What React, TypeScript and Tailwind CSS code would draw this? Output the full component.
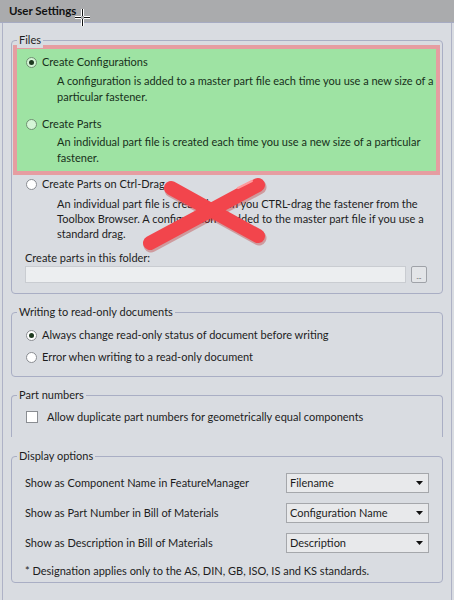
import React from "react";

const font = { fontFamily: "Lato, 'Open Sans', sans-serif" };

function Radio({ checked, green }: { checked?: boolean; green?: boolean }) {
  return (
    <span
      className={`flex h-[11px] w-[11px] shrink-0 items-center justify-center rounded-full border ${
        green ? "border-[#6f8f72] bg-[#d4f5d6]" : "border-[#8a8d92] bg-white"
      }`}
    >
      {checked && <span className="h-[5px] w-[5px] rounded-full bg-[#1e3a20]" />}
    </span>
  );
}

function Select({ value }: { value: string }) {
  return (
    <div className="flex h-[20px] w-[143px] items-center justify-between border border-[#a5a7ab] bg-[#e8e9eb] pl-[3px] pr-[5px] text-[#1d1d1d]">
      <span>{value}</span>
      <svg width="7" height="4" viewBox="0 0 7 4">
        <path d="M0 0h7L3.5 4z" fill="#111" />
      </svg>
    </div>
  );
}

function Legend({ children }: { children: React.ReactNode }) {
  return (
    <span className="absolute left-[5px] top-[-9px] bg-[#d9dce1] px-[2px] leading-[16px] text-[#1d1d1d]">
      {children}
    </span>
  );
}

export default function App() {
  return (
    <div
      className="relative h-[600px] w-[454px] overflow-hidden bg-[#d9dce1] text-[11px] leading-[16px] text-[#1d1d1d]"
      style={font}
    >
      <div className="flex h-[23px] items-center border-b border-[#a6abc2] bg-[#aaabad] pl-[9px] text-[11.5px] font-bold text-[#111]">
        User Settings
      </div>
      <div className="ml-[2px] flex h-[577px] w-[450px] flex-col border-x border-[#aeb2c6] bg-[#d9dce1] pl-[8px] pt-[17px]">
        {/* Files */}
        <div className="relative w-[432px] rounded-[4px] border border-[#a9aec4] pb-[10px] pt-[4px]">
          <Legend>Files</Legend>
          <div className="ml-[1px] w-[427px] border-[4px] border-[#e69da1] bg-[#9ee3a3] pb-[5px] pt-[5px] text-[#17301a]">
            <div className="flex h-[16px] items-center pl-[9px]">
              <Radio checked green />
              <span className="ml-[5px]">Create Configurations</span>
            </div>
            <div className="mt-[3px] pl-[40px]">
              A configuration is added to a master part file each time you use a new size of a
              <br />
              particular fastener.
            </div>
            <div className="mt-[11px] flex h-[16px] items-center pl-[9px]">
              <Radio green />
              <span className="ml-[5px]">Create Parts</span>
            </div>
            <div className="mt-[2px] pl-[40px]">
              An individual part file is created each time you use a new size of a particular
              <br />
              fastener.
            </div>
          </div>
          <div className="mt-[1px] flex h-[16px] items-center pl-[14px]">
            <Radio />
            <span className="ml-[5px]">Create Parts on Ctrl-Drag</span>
          </div>
          <div className="mt-[4px] pl-[45px] leading-[15px]">
            An individual part file is created when you CTRL-drag the fastener from the
            <br />
            Toolbox Browser. A configuration is added to the master part file if you use a
            <br />
            standard drag.
          </div>
          <div className="mt-[9px] pl-[13px]">Create parts in this folder:</div>
          <div className="flex items-center pl-[13px]">
            <div className="h-[17px] w-[381px] border border-[#c9ccd1] bg-[#eceef0]" />
            <div className="ml-[5px] flex h-[17px] w-[16px] items-end justify-center rounded-[2px] border border-[#9fa2a8] bg-[#e3e5e8] pb-[2px] text-[7px] leading-[7px] text-[#555]">
              ...
            </div>
          </div>
        </div>

        {/* Writing */}
        <div className="relative mt-[18px] w-[432px] rounded-[4px] border border-[#a9aec4] pb-[11px] pt-[14px]">
          <Legend>Writing to read-only documents</Legend>
          <div className="flex h-[16px] items-center pl-[14px]">
            <Radio checked />
            <span className="ml-[5px]">Always change read-only status of document before writing</span>
          </div>
          <div className="mt-[6px] flex h-[16px] items-center pl-[14px]">
            <Radio />
            <span className="ml-[5px]">Error when writing to a read-only document</span>
          </div>
        </div>

        {/* Part numbers */}
        <div className="relative mt-[18px] w-[432px] rounded-t-[4px] border border-b-0 border-[#a9aec4] pb-[12px] pt-[13px]">
          <Legend>Part numbers</Legend>
          <div className="flex h-[16px] items-center pl-[14px]">
            <span className="h-[12px] w-[12px] shrink-0 border border-[#8a8d92] bg-white" />
            <span className="ml-[9px]">Allow duplicate part numbers for geometrically equal components</span>
          </div>
        </div>

        {/* Display options */}
        <div className="relative mt-[19px] w-[432px] rounded-[4px] border border-[#a9aec4] pb-[3px] pt-[16px]">
          <Legend>Display options</Legend>
          <div className="flex flex-col gap-[10px]">
            <div className="flex items-center justify-between pl-[13px] pr-[13px]">
              <span>Show as Component Name in FeatureManager</span>
              <Select value="Filename" />
            </div>
            <div className="flex items-center justify-between pl-[13px] pr-[13px]">
              <span>Show as Part Number in Bill of Materials</span>
              <Select value="Configuration Name" />
            </div>
            <div className="flex items-center justify-between pl-[13px] pr-[13px]">
              <span>Show as Description in Bill of Materials</span>
              <Select value="Description" />
            </div>
          </div>
          <div className="mt-[10px] pl-[13px]">
            * Designation applies only to the AS, DIN, GB, ISO, IS and KS standards.
          </div>
        </div>
      </div>

      {/* cursor crosshair */}
      <svg className="absolute left-[74px] top-[8px]" width="17" height="19" viewBox="0 0 17 19">
        <path d="M8.5 1v7M8.5 11v7M1 9.5h6M10 9.5h6" stroke="#fff" strokeWidth="3" />
        <path d="M8.5 1v7M8.5 11v7M1 9.5h6M10 9.5h6" stroke="#111" strokeWidth="1" />
      </svg>

      {/* red X */}
      <svg className="pointer-events-none absolute left-[138px] top-[172px]" width="136" height="86" viewBox="0 0 136 86">
        <g strokeLinecap="round" fill="none">
          <path d="M33 16 L120 64" stroke="#b22" strokeOpacity="0.35" strokeWidth="15" transform="translate(1 2)" />
          <path d="M120 13 L12 71" stroke="#b22" strokeOpacity="0.35" strokeWidth="15" transform="translate(1 2)" />
          <path d="M33 16 L120 64" stroke="#f2454c" strokeWidth="14" />
          <path d="M120 13 L12 71" stroke="#f2454c" strokeWidth="14" />
          <path d="M100 16 L114 9" stroke="#ff9a9c" strokeWidth="2" />
        </g>
      </svg>
    </div>
  );
}
